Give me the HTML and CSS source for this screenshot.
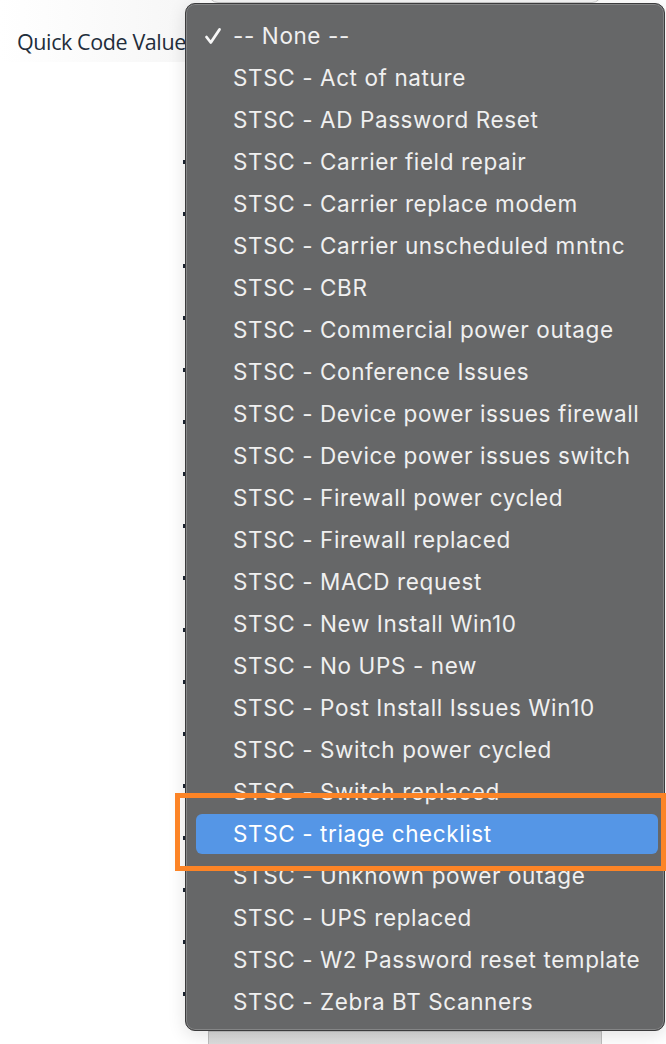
FILE: index.html
```html
<!DOCTYPE html>
<html>
<head>
<meta charset="utf-8">
<link rel="stylesheet" href="styles.css">
</head>
<body>
<div class="page">
  <div class="field-row">
    <label class="field-label">Quick Code Value</label>
  </div>
  <div class="under-select top"></div>
  <div class="under-select bottom"></div>
  <div class="under-edge"></div>

  <div class="menu">
    <ul class="menu-list">
      <li class="item checked"><svg class="check" width="18" height="18" viewBox="0 0 18 18"><path d="M2.5 10 L6.8 15.5 L15.5 2.5" fill="none" stroke="#f7f7f7" stroke-width="2.8" stroke-linecap="round" stroke-linejoin="round"/></svg>-- None --</li>
      <li class="item">STSC - Act of nature</li>
      <li class="item">STSC - AD Password Reset</li>
      <li class="item">STSC - Carrier field repair</li>
      <li class="item">STSC - Carrier replace modem</li>
      <li class="item">STSC - Carrier unscheduled mntnc</li>
      <li class="item">STSC - CBR</li>
      <li class="item">STSC - Commercial power outage</li>
      <li class="item">STSC - Conference Issues</li>
      <li class="item">STSC - Device power issues firewall</li>
      <li class="item">STSC - Device power issues switch</li>
      <li class="item">STSC - Firewall power cycled</li>
      <li class="item">STSC - Firewall replaced</li>
      <li class="item">STSC - MACD request</li>
      <li class="item">STSC - New Install Win10</li>
      <li class="item">STSC - No UPS - new</li>
      <li class="item">STSC - Post Install Issues Win10</li>
      <li class="item">STSC - Switch power cycled</li>
      <li class="item">STSC - Switch replaced</li>
      <li class="item selected">STSC - triage checklist</li>
      <li class="item">STSC - Unknown power outage</li>
      <li class="item">STSC - UPS replaced</li>
      <li class="item">STSC - W2 Password reset template</li>
      <li class="item">STSC - Zebra BT Scanners</li>
    </ul>
  </div>
  <div class="annotation"></div>
</div>
</body>
</html>
```

FILE: styles.css
```css
html, body {
  margin: 0;
  padding: 0;
  background: #ffffff;
}
.page {
  position: relative;
  width: 666px;
  height: 1044px;
  overflow: hidden;
  font-family: Inter, "Noto Sans", sans-serif;
}
.field-row {
  height: 62px;
  width: 200px;
  display: flex;
  align-items: center;
  padding-left: 17px;
  box-sizing: border-box;
  background: linear-gradient(to right, #ffffff 0%, #f6f6f6 100%);
}
.field-label {
  font-family: "Open Sans", "Noto Sans", sans-serif;
  font-size: 21.5px;
  letter-spacing: -0.4px;
  color: #222d3b;
  white-space: nowrap;
  padding-top: 20px;
}
.under-select {
  position: absolute;
  left: 208px;
  width: 394px;
  border: 1px solid #c9c9c9;
  background: #f1f1f1;
  box-sizing: border-box;
}
.under-select.top {
  top: -20px;
  height: 23px;
  border-radius: 10px;
  background: #f6f6f6;
}
.under-select.bottom {
  top: 1031px;
  height: 30px;
  background: linear-gradient(#d7d7d7, #e6e6e6);
  border-color: #bdbdbd;
}
.under-edge {
  position: absolute;
  left: 183px;
  top: 130px;
  width: 2px;
  height: 900px;
  background: repeating-linear-gradient(#ffffff 0, #ffffff 30px, #1d2633 30px, #1d2633 34px, #ffffff 34px, #ffffff 52px);
}
.menu {
  position: absolute;
  left: 185px;
  top: 3px;
  width: 480px;
  height: 1028px;
  box-sizing: border-box;
  background: #666768;
  border: 1px solid #3b3b3c;
  border-radius: 10px;
  box-shadow: inset 0 0 0 1px #848586, 0 4px 18px rgba(0,0,0,0.12);
}
.menu-list {
  list-style: none;
  margin: 0;
  padding: 11px 0 0 0;
}
.item {
  position: relative;
  height: 42px;
  line-height: 42px;
  margin: 0 6px 0 10px;
  padding-left: 37px;
  border-radius: 6px;
  font-size: 22.5px;
  letter-spacing: 0.6px;
  color: #f0f0f0;
  white-space: nowrap;
}
.item .check {
  position: absolute;
  left: 8px;
  top: 12px;
}
.item.selected {
  background: #5596e6;
  color: #ffffff;
  height: 40px;
  line-height: 40px;
  margin-top: 1px;
  margin-bottom: 1px;
}
.annotation {
  position: absolute;
  left: 175px;
  top: 793px;
  width: 491px;
  height: 78px;
  box-sizing: border-box;
  border: 5px solid #fc8426;
}
```
